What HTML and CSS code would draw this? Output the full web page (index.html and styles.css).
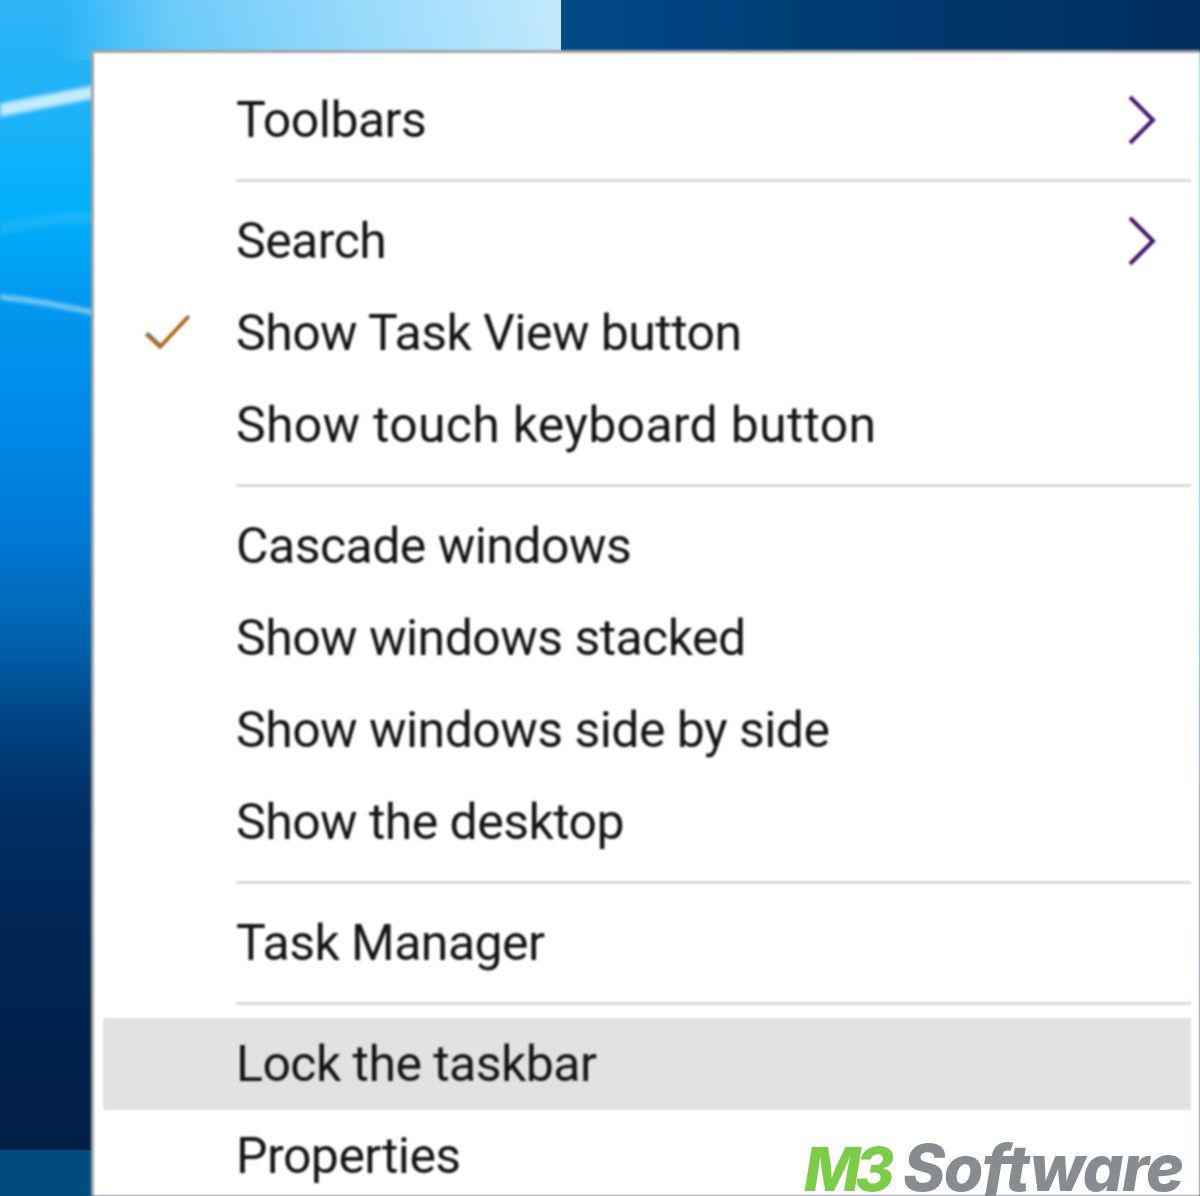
FILE: index.html
```html
<!DOCTYPE html>
<html lang="en">
<head>
<meta charset="utf-8">
<title>Taskbar context menu</title>
<link rel="stylesheet" href="styles.css">
</head>
<body>
<div class="desktop">
  <svg class="streaks" width="100" height="330" viewBox="0 0 100 330" aria-hidden="true">
    <path class="streak-wide" d="M-10 112 L100 91"/>
    <path class="streak-thin" d="M-10 296 Q40 300 100 314"/>
    <path class="streak-faint" d="M-10 232 Q50 215 100 218"/>
  </svg>
  <div class="menu">
    <div class="row"><span class="label">Toolbars</span>
      <svg class="chevron" width="36" height="56" viewBox="0 0 36 56"><path d="M5 5 L28 28 L5 51"/></svg></div>
    <div class="sep"></div>
    <div class="row"><span class="label">Search</span>
      <svg class="chevron" width="36" height="56" viewBox="0 0 36 56"><path d="M5 5 L28 28 L5 51"/></svg></div>
    <div class="row"><svg class="check" width="52" height="40" viewBox="0 0 52 40"><path class="check-blue" d="M6 21 L20 34 L48 4"/><path class="check-orange" d="M5 22 L19 35 L47 5"/></svg><span class="label">Show Task View button</span></div>
    <div class="row"><span class="label label-wide">Show touch keyboard button</span></div>
    <div class="sep"></div>
    <div class="row"><span class="label">Cascade windows</span></div>
    <div class="row"><span class="label">Show windows stacked</span></div>
    <div class="row"><span class="label">Show windows side by side</span></div>
    <div class="row"><span class="label">Show the desktop</span></div>
    <div class="sep"></div>
    <div class="row"><span class="label">Task Manager</span></div>
    <div class="sep"></div>
    <div class="row active"><span class="label">Lock the taskbar</span></div>
    <div class="row"><span class="label">Properties</span></div>
  </div>
  <div class="brand"><span class="brand-m3">M3</span> <span class="brand-name">Software</span></div>
</div>
</body>
</html>
```
FILE: styles.css
```css
html, body { margin: 0; padding: 0; }
body { width: 1200px; height: 1196px; overflow: hidden; }
.desktop {
  position: relative;
  width: 1200px;
  height: 1196px;
  overflow: hidden;
  padding: 50px 0 0 91px;
  box-sizing: border-box;
  background:
    linear-gradient(#004c7c, #004c7c) 0 1150px / 100px 46px no-repeat,
    linear-gradient(90deg, #004a88 0, #003a70 300px, #002e5e 640px) 561px 0 / 640px 52px no-repeat,
    linear-gradient(90deg, rgba(255,255,255,0) 60px, rgba(255,255,255,.3) 170px, rgba(255,255,255,.5) 350px, rgba(255,255,255,.7) 550px) 0 0 / 561px 60px no-repeat,
    linear-gradient(180deg, #2eb4f6 0, #1cb2f7 120px, #00b0fb 210px, #0298f0 300px, #0088e6 430px, #0078d4 540px, #0062ad 640px, #004482 720px, #002f62 810px, #002452 950px, #001f47 1150px);
}
.streaks { position: absolute; left: 0; top: 0; filter: blur(2px); }
.streaks path { fill: none; stroke: #dff4ff; }
.streak-wide { stroke-width: 13; opacity: .85; }
.streak-thin { stroke-width: 5; opacity: .6; }
.streak-faint { stroke-width: 12; opacity: .1; }
.menu {
  position: relative;
  box-sizing: border-box;
  width: 1109px;
  height: 1146px;
  padding: 21px 0 0 9px;
  background: #fff;
  border-top: 3px solid #a3a3a3;
  border-left: 3px solid #a3a3a3;
  font-family: Roboto, sans-serif;
  color: #141414;
  filter: blur(.8px);
}
.row {
  position: relative;
  display: flex;
  align-items: center;
  justify-content: space-between;
  width: 1088px;
  height: 92px;
  box-sizing: border-box;
  padding: 0 30px 0 133px;
}
.row.active { background: #e2e2e2; }
.label {
  font-size: 50px;
  line-height: 92px;
  letter-spacing: -.55px;
  white-space: nowrap;
}
.label-wide { letter-spacing: .27px; }
.chevron path { fill: none; stroke: #45186a; stroke-width: 4; }
.check { position: absolute; left: 38px; top: 25px; }
.check path { fill: none; stroke-width: 3.6; }
.check-blue { stroke: #3f8fdc; }
.check-orange { stroke: #bd6a10; }
.sep {
  height: 3px;
  margin: 13px 0 13px 133px;
  width: 955px;
  background: #d8d8d8;
}
.brand {
  position: absolute;
  left: 804px;
  top: 1138px;
  font-family: Inter, sans-serif;
  font-size: 64px;
  font-weight: 800;
  font-style: italic;
  line-height: 60px;
  white-space: nowrap;
  filter: blur(.6px);
}
.brand-m3 { color: #7ccb4a; font-size: 60px; letter-spacing: -5.5px; }
.brand-name { color: #868c90; letter-spacing: -1.4px; }
```
